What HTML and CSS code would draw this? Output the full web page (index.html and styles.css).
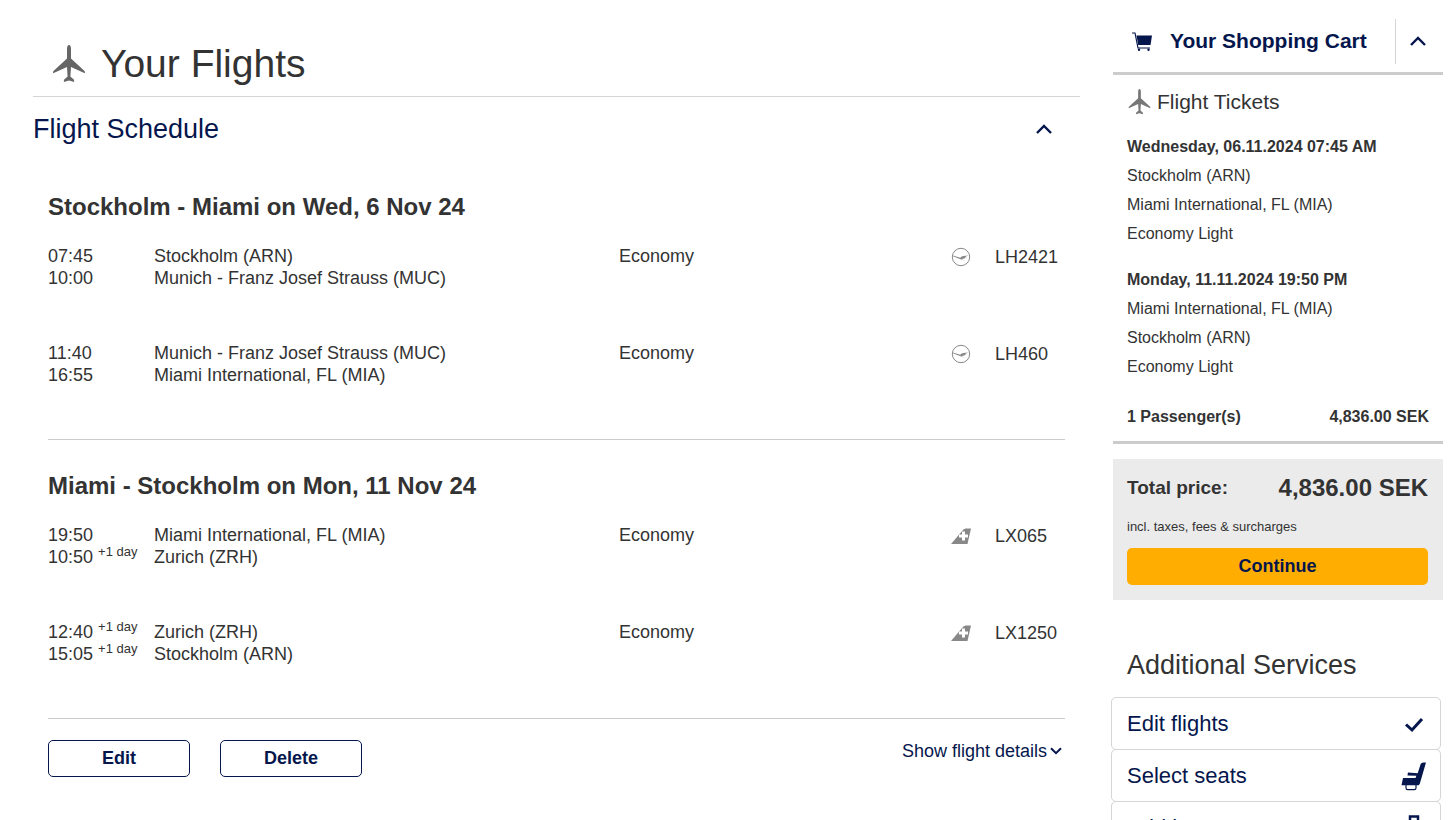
FILE: index.html
```html
<!DOCTYPE html>
<html lang="en">
<head>
  <meta charset="UTF-8" />
  <meta name="viewport" content="width=device-width, initial-scale=1.0" />
  <title>Your Flights</title>
  <link rel="stylesheet" href="styles.css">
</head>
<body>
  <svg class="symbols" aria-hidden="true">
    <symbol id="plane" viewBox="0 0 32 38">
      <path d="M16 0c1.4 0 2 2 2 4v9.500L31.500 26c.5.6.5 1.200.3 2.200L18 22l-.6 9.500 3.600 3.200.2 2.300-5.200-1.500L10.800 37l.2-2.300 3.600-3.200L14 22 .2 28.200c-.2-1-.2-1.600.3-2.200L14 13.500V4c0-2 .6-4 2-4z" fill="currentColor"/>
    </symbol>
    <symbol id="chevron-up" viewBox="0 0 16 10">
      <path d="M1 9l7-7 7 7" fill="none" stroke="currentColor" stroke-width="2.400"/>
    </symbol>
    <symbol id="chevron-down" viewBox="0 0 12 8">
      <path d="M1 1.200l5 5 5-5" fill="none" stroke="currentColor" stroke-width="2"/>
    </symbol>
    <symbol id="lufthansa" viewBox="0 0 20 20">
      <circle cx="10" cy="10" r="8.700" fill="none" stroke="currentColor" stroke-width="1"/>
      <path d="M2 8.600l7.200 2.200c1-.9 1.800-1.500 3-1.700l5.300-.6-3.200 1.300 1.500.1-2.200.9.9.1-2.200.8-2 .3 3.700 1.900-5.200-2L2 9.300z" fill="currentColor"/>
    </symbol>
    <symbol id="swiss" viewBox="0 0 20 16">
      <path d="M0 16L11.500 2.500C12.800 1 14 .5 15.500.5H20L16.500 16z" fill="currentColor"/>
      <path d="M11 3.500h3v3h3v3h-3v3h-3v-3H8v-3h3z" fill="#fff"/>
    </symbol>
  </svg>

  <div class="page">
    <main class="flights">
      <h1 class="page-title">
        <svg class="title-icon"><use href="#plane"/></svg>
        Your Flights
      </h1>

      <section class="schedule">
        <div class="schedule-header">
          <h2>Flight Schedule</h2>
          <button class="toggle" aria-label="Collapse flight schedule">
            <svg class="chevron"><use href="#chevron-up"/></svg>
          </button>
        </div>

        <div class="trip">
          <h3>Stockholm - Miami on Wed, 6 Nov 24</h3>
          <div class="segment">
            <div>07:45<br>10:00</div>
            <div>Stockholm (ARN)<br>Munich - Franz Josef Strauss (MUC)</div>
            <div>Economy</div>
            <svg class="airline"><use href="#lufthansa"/></svg>
            <div class="flight-no">LH2421</div>
          </div>
          <div class="segment">
            <div>11:40<br>16:55</div>
            <div>Munich - Franz Josef Strauss (MUC)<br>Miami International, FL (MIA)</div>
            <div>Economy</div>
            <svg class="airline"><use href="#lufthansa"/></svg>
            <div class="flight-no">LH460</div>
          </div>
        </div>

        <div class="trip">
          <h3>Miami - Stockholm on Mon, 11 Nov 24</h3>
          <div class="segment">
            <div>19:50<br>10:50 <sup>+1 day</sup></div>
            <div>Miami International, FL (MIA)<br>Zurich (ZRH)</div>
            <div>Economy</div>
            <svg class="airline swiss"><use href="#swiss"/></svg>
            <div class="flight-no">LX065</div>
          </div>
          <div class="segment">
            <div>12:40 <sup>+1 day</sup><br>15:05 <sup>+1 day</sup></div>
            <div>Zurich (ZRH)<br>Stockholm (ARN)</div>
            <div>Economy</div>
            <svg class="airline swiss"><use href="#swiss"/></svg>
            <div class="flight-no">LX1250</div>
          </div>
        </div>

        <div class="actions">
          <button class="outline-btn">Edit</button>
          <button class="outline-btn">Delete</button>
          <a class="details-link" href="#">Show flight details<svg><use href="#chevron-down"/></svg></a>
        </div>
      </section>
    </main>

    <aside class="sidebar">
      <section class="cart">
        <div class="cart-header">
          <svg class="cart-icon" viewBox="0 0 20 19">
            <path d="M0 1h3l3 15h12" fill="none" stroke="currentColor" stroke-width="1.200"/>
            <path d="M4.500 3.500H20L18.500 13H6.200z" fill="currentColor"/>
            <circle cx="7" cy="17.800" r="1.200" fill="currentColor"/>
            <circle cx="16.500" cy="17.800" r="1.200" fill="currentColor"/>
          </svg>
          <h2>Your Shopping Cart</h2>
          <button class="toggle" aria-label="Collapse shopping cart">
            <svg class="chevron"><use href="#chevron-up"/></svg>
          </button>
        </div>
        <div class="cart-body">
          <h3><svg class="tickets-icon"><use href="#plane"/></svg>Flight Tickets</h3>
          <ul class="ticket">
            <li><strong>Wednesday, 06.11.2024 07:45 AM</strong></li>
            <li>Stockholm (ARN)</li>
            <li>Miami International, FL (MIA)</li>
            <li>Economy Light</li>
          </ul>
          <ul class="ticket">
            <li><strong>Monday, 11.11.2024 19:50 PM</strong></li>
            <li>Miami International, FL (MIA)</li>
            <li>Stockholm (ARN)</li>
            <li>Economy Light</li>
          </ul>
          <div class="passengers">
            <span>1 Passenger(s)</span>
            <span>4,836.00 SEK</span>
          </div>
        </div>
      </section>

      <section class="total">
        <div class="total-row">
          <span class="total-label">Total price:</span>
          <span class="total-price">4,836.00 SEK</span>
        </div>
        <p>incl. taxes, fees &amp; surcharges</p>
        <button class="continue-btn">Continue</button>
      </section>

      <section class="services">
        <h2>Additional Services</h2>
        <nav>
          <a href="#">Edit flights
            <svg class="service-icon" viewBox="0 0 28 30">
              <path d="M6 15.500l6 5.500L22 10" fill="none" stroke="currentColor" stroke-width="3"/>
            </svg>
          </a>
          <a href="#">Select seats
            <svg class="service-icon" viewBox="0 0 28 30">
              <path d="M20.500 3.500c.6-1.500 1.500-2 5.500-2L20 22c-.4 1.500-1 2.300-2.500 2.300H1.500L3 17h12.500l.9-2.300-8.900-.2.400-3 9.800.8z" fill="currentColor"/>
              <path d="M6 24v3c0 1.200.6 1.700 1.700 1.700h6.600c1.100 0 1.700-.5 1.700-1.700v-3" fill="none" stroke="currentColor" stroke-width="1.200"/>
            </svg>
          </a>
          <a href="#">Add baggage
            <svg class="service-icon" viewBox="0 0 28 30">
              <path d="M10 8V3.500h8V8" fill="none" stroke="currentColor" stroke-width="2.500"/>
              <path d="M6 7h16v21H6zM1 10c0-2 1-3 3-3v21c-2 0-3-1-3-3zM27 10c0-2-1-3-3-3v21c2 0 3-1 3-3z" fill="currentColor"/>
            </svg>
          </a>
        </nav>
      </section>
    </aside>
  </div>
</body>
</html>
```
FILE: styles.css
```css
* {
  box-sizing: border-box;
}
body {
  margin: 0;
  font-family: Arial, "Liberation Sans", sans-serif;
  font-size: 18px;
  line-height: 22px;
  color: #333;
  background: #fff;
}
h1, h2, h3, p, ul {
  margin: 0;
  padding: 0;
  font-weight: normal;
}
ul {
  list-style: none;
}
button {
  font-family: inherit;
  cursor: pointer;
}
a {
  color: #05164d;
  text-decoration: none;
}
svg {
  flex-shrink: 0;
}
.symbols {
  display: none;
}
.page {
  display: flex;
  align-items: flex-start;
  gap: 33px;
  padding: 0 12px 0 33px;
}

/* flight list */
.flights {
  flex: 1;
  min-width: 0;
  border-bottom: 2px solid #d5d5d5;
}
.page-title {
  display: flex;
  align-items: center;
  gap: 16px;
  padding: 32px 0 0 20px;
  height: 97px;
  font-size: 39px;
  line-height: 44px;
  border-bottom: 1px solid #d5d5d5;
}
.title-icon {
  width: 32px;
  height: 38px;
  color: #666;
}
.schedule-header {
  display: flex;
  justify-content: space-between;
  align-items: center;
  height: 64px;
  padding-right: 28px;
  color: #05164d;
}
.schedule-header h2 {
  font-size: 27px;
  line-height: 32px;
}
.toggle {
  display: flex;
  padding: 0;
  border: 0;
  background: none;
  color: #05164d;
}
.chevron {
  width: 16px;
  height: 10px;
}
.trip {
  margin: 0 15px;
  padding-top: 30px;
  border-bottom: 1px solid #ccc;
}
.trip h3 {
  margin-bottom: 22px;
  font-size: 24px;
  line-height: 32px;
  font-weight: bold;
}
.segment {
  display: grid;
  grid-template-columns: 106px 1fr 332px 44px 70px;
  padding-bottom: 53px;
}
.segment sup {
  font-size: 13px;
  line-height: 0;
}
.airline {
  width: 20px;
  height: 20px;
  margin-top: 2px;
  color: #888;
}
.airline.swiss {
  height: 16px;
  margin-top: 4px;
}
.flight-no {
  padding-top: 1px;
}
.actions {
  display: flex;
  align-items: flex-start;
  gap: 30px;
  padding: 21px 18px 44px 15px;
}
.outline-btn {
  width: 142px;
  height: 37px;
  font-size: 18px;
  font-weight: bold;
  color: #05164d;
  background: #fff;
  border: 1px solid #05164d;
  border-radius: 5px;
}
.details-link {
  display: flex;
  align-items: center;
  gap: 3px;
  margin-left: auto;
}
.details-link svg {
  width: 12px;
  height: 8px;
}

/* shopping cart */
.sidebar {
  width: 330px;
}
.cart {
  border-bottom: 3px solid #ccc;
}
.cart-header {
  display: flex;
  align-items: center;
  height: 75px;
  padding: 10px 0 0 19px;
  color: #05164d;
  border-bottom: 3px solid #ccc;
}
.cart-header h2 {
  flex: 1;
  padding-left: 18px;
  font-size: 21px;
  font-weight: bold;
}
.cart-header .toggle {
  align-items: center;
  justify-content: center;
  width: 48px;
  height: 45px;
  padding-right: 4px;
  border-left: 1px solid #d5d5d5;
}
.cart-icon {
  width: 20px;
  height: 19px;
}
.cart-body {
  padding: 12px 14px 10px;
  font-size: 16px;
  line-height: 29px;
}
.cart-body h3 {
  display: flex;
  align-items: center;
  gap: 5px;
  margin-bottom: 16px;
  font-size: 21px;
}
.tickets-icon {
  width: 25px;
  height: 26px;
  color: #777;
}
.ticket {
  margin-bottom: 17px;
}
.passengers {
  display: flex;
  justify-content: space-between;
  padding-top: 4px;
  font-weight: bold;
}
.total {
  margin-top: 15px;
  padding: 14px 15px 15px 14px;
  background: #ebebeb;
}
.total-row {
  display: flex;
  justify-content: space-between;
  align-items: center;
  line-height: 30px;
  font-weight: bold;
}
.total-label {
  font-size: 19px;
}
.total-price {
  font-size: 24px;
}
.total p {
  margin: 13px 0 10px;
  font-size: 13px;
}
.continue-btn {
  display: block;
  width: 100%;
  height: 37px;
  font-size: 18px;
  font-weight: bold;
  color: #05164d;
  background: #ffad00;
  border: 0;
  border-radius: 5px;
}

/* additional services */
.services {
  margin: 49px 2px 0 -2px;
}
.services h2 {
  margin-bottom: 16px;
  padding-left: 16px;
  font-size: 27px;
  line-height: 32px;
}
.services a {
  display: flex;
  justify-content: space-between;
  align-items: center;
  height: 53px;
  padding: 0 12px 0 15px;
  font-size: 22px;
  border: 1px solid #d5d5d5;
  border-radius: 5px;
}
.services a + a {
  margin-top: -1px;
}
.service-icon {
  width: 28px;
  height: 30px;
}
```
